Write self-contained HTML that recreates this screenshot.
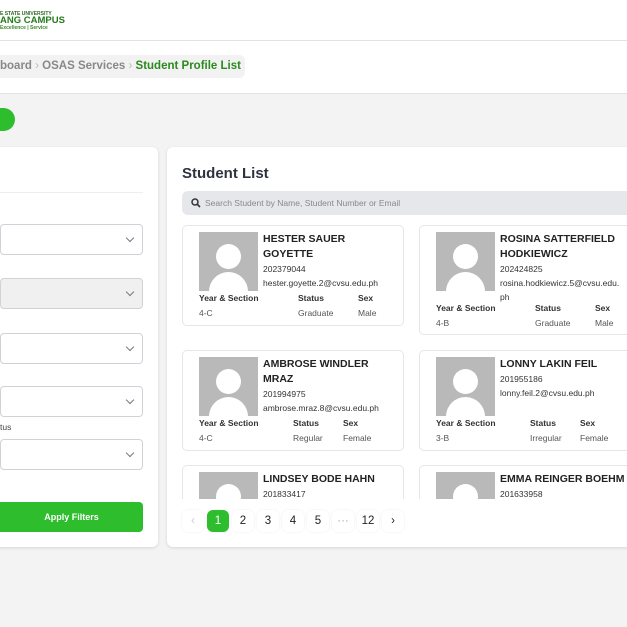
<!DOCTYPE html><html><head><style>
*{box-sizing:border-box;margin:0;padding:0}
body{width:627px;height:627px;overflow:hidden;background:#f3f3f3;font-family:"Liberation Sans",Arial,sans-serif;position:relative}
.abs{position:absolute}
.hdr{left:0;top:0;width:627px;height:41px;background:#fff;border-bottom:1px solid #e2e2e2}
.bc{left:0;top:41px;width:627px;height:53px;background:#fff;border-bottom:1px solid #e2e2e2}
.panel{background:#fff;border-radius:6px;box-shadow:0 1px 3px rgba(0,0,0,.12)}
.sel{position:absolute;width:143px;height:31px;border:1px solid #cfd3d8;border-radius:4px;background:#fff}
.sel:after{content:"";position:absolute;right:9px;top:10px;width:5px;height:5px;border-right:1.5px solid #777;border-bottom:1.5px solid #777;transform:rotate(45deg)}
.card{position:absolute;background:#fff;border:1px solid #e6e6e6;border-radius:5px;width:222px}
.av{position:absolute;left:16px;top:6px;width:59px;height:59px;background:#b9b9b9;overflow:hidden}
.av:before{content:"";position:absolute;left:17px;top:12px;width:25px;height:25px;border-radius:50%;background:#fff}
.av:after{content:"";position:absolute;left:10px;top:40px;width:39px;height:30px;border-radius:20px 20px 0 0;background:#fff}
.nm{position:absolute;left:80px;top:6px;font-size:10.5px;font-weight:bold;color:#222;line-height:15px;width:122px}
.t{font-size:8.5px;color:#333;font-weight:normal;line-height:14px;width:140px}
.lbl{position:absolute;font-size:8.5px;font-weight:bold;color:#333}
.val{position:absolute;font-size:8.5px;color:#555}
.pg{position:absolute;top:510px;width:22px;height:22px;border-radius:6px;font-size:11.5px;text-align:center;line-height:22px;color:#222;background:#fff;box-shadow:0 0 2px rgba(0,0,0,.08)}
</style></head><body>
<div class="abs hdr">
<div class="abs" style="left:0;top:11px;font-size:5px;font-weight:bold;color:#2d6a1f">E STATE UNIVERSITY</div>
<div class="abs" style="left:0;top:15px;font-size:9.5px;font-weight:bold;color:#237a1c">ANG CAMPUS</div>
<div class="abs" style="left:0;top:25px;font-size:5px;font-weight:bold;color:#3a8a2a">Excellence | Service</div>
</div>
<div class="abs bc">
<div class="abs" style="left:-10px;top:14px;width:255px;height:23px;background:#f2f2f2;border-radius:6px"></div>
<div class="abs" style="left:0;top:19px;font-size:11.5px;font-weight:bold;color:#888;white-space:nowrap">board <span style="color:#bbb;font-weight:normal">›</span> OSAS Services <span style="color:#bbb;font-weight:normal">›</span> <span style="color:#2a8a1e">Student Profile List</span></div>
</div>
<div class="abs" style="left:-20px;top:108px;width:35px;height:23px;border-radius:12px;background:#2dbd2d"></div>
<div class="abs panel" style="left:-10px;top:147px;width:168px;height:400px">
<div class="abs" style="left:10px;top:45px;width:143px;height:1px;background:#eee"></div>
<div class="sel" style="left:10px;top:77px"></div>
<div class="sel" style="left:10px;top:131px;background:#f0f0f0"></div>
<div class="sel" style="left:10px;top:186px"></div>
<div class="sel" style="left:10px;top:239px"></div>
<div class="abs" style="left:10px;top:275px;font-size:8.5px;color:#444">tus</div>
<div class="sel" style="left:10px;top:292px"></div>
<div class="abs" style="left:0;top:355px;width:153px;height:30px;background:#2dbd2d;border-radius:4px;color:#fff;font-size:9px;font-weight:bold;text-align:center;line-height:30px;padding-left:10px">Apply Filters</div>
</div>
<div class="abs panel" style="left:167px;top:147px;width:480px;height:400px;overflow:hidden">
<div class="abs" style="left:15px;top:18px;font-size:15px;font-weight:bold;color:#2d3340">Student List</div>
<div class="abs" style="left:15px;top:44px;width:460px;height:24px;background:#e6e7ea;border-radius:6px">
<svg class="abs" style="left:9px;top:7px" width="10" height="10" viewBox="0 0 10 10"><circle cx="4" cy="4" r="3" fill="none" stroke="#333" stroke-width="1.5"/><path d="M6.2 6.2L9 9" stroke="#333" stroke-width="1.6"/></svg>
<div class="abs" style="left:23px;top:7px;font-size:8.5px;color:#888">Search Student by Name, Student Number or Email</div></div>
<div class="abs" style="left:0;top:70px;width:480px;height:282px;overflow:hidden">
<div class="card" style="left:15px;top:8px;height:101px"><div class="av"></div><div class="nm">HESTER SAUER GOYETTE<div class="t">202379044<br>hester.goyette.2@cvsu.edu.ph</div></div>
<div class="lbl" style="left:16px;top:67px">Year &amp; Section</div><div class="lbl" style="left:115px;top:67px">Status</div><div class="lbl" style="left:175px;top:67px">Sex</div>
<div class="val" style="left:16px;top:82px">4-C</div><div class="val" style="left:115px;top:82px">Graduate</div><div class="val" style="left:175px;top:82px">Male</div></div>
<div class="card" style="left:252px;top:8px;height:110px"><div class="av"></div><div class="nm">ROSINA SATTERFIELD HODKIEWICZ<div class="t">202424825<br>rosina.hodkiewicz.5@cvsu.edu.<br>ph</div></div>
<div class="lbl" style="left:16px;top:77px">Year &amp; Section</div><div class="lbl" style="left:115px;top:77px">Status</div><div class="lbl" style="left:175px;top:77px">Sex</div>
<div class="val" style="left:16px;top:92px">4-B</div><div class="val" style="left:115px;top:92px">Graduate</div><div class="val" style="left:175px;top:92px">Male</div></div>
<div class="card" style="left:15px;top:133px;height:101px"><div class="av"></div><div class="nm">AMBROSE WINDLER MRAZ<div class="t">201994975<br>ambrose.mraz.8@cvsu.edu.ph</div></div>
<div class="lbl" style="left:16px;top:67px">Year &amp; Section</div><div class="lbl" style="left:110px;top:67px">Status</div><div class="lbl" style="left:160px;top:67px">Sex</div>
<div class="val" style="left:16px;top:82px">4-C</div><div class="val" style="left:110px;top:82px">Regular</div><div class="val" style="left:160px;top:82px">Female</div></div>
<div class="card" style="left:252px;top:133px;height:101px"><div class="av"></div><div class="nm">LONNY LAKIN FEIL<div class="t">201955186<br>lonny.feil.2@cvsu.edu.ph</div></div>
<div class="lbl" style="left:16px;top:67px">Year &amp; Section</div><div class="lbl" style="left:110px;top:67px">Status</div><div class="lbl" style="left:160px;top:67px">Sex</div>
<div class="val" style="left:16px;top:82px">3-B</div><div class="val" style="left:110px;top:82px">Irregular</div><div class="val" style="left:160px;top:82px">Female</div></div>
<div class="card" style="left:15px;top:248px;height:101px"><div class="av"></div><div class="nm">LINDSEY BODE HAHN<div class="t">201833417</div></div></div>
<div class="card" style="left:252px;top:248px;height:101px"><div class="av"></div><div class="nm" style="width:140px">EMMA REINGER BOEHM<div class="t">201633958</div></div></div>
</div>
</div>
<div class="pg" style="left:182px;color:#ccc">‹</div>
<div class="pg" style="left:207px;background:#2dbd2d;color:#fff">1</div>
<div class="pg" style="left:232px">2</div>
<div class="pg" style="left:257px">3</div>
<div class="pg" style="left:282px">4</div>
<div class="pg" style="left:307px">5</div>
<div class="pg" style="left:332px;color:#aaa">···</div>
<div class="pg" style="left:357px">12</div>
<div class="pg" style="left:382px">›</div>
</body></html>
